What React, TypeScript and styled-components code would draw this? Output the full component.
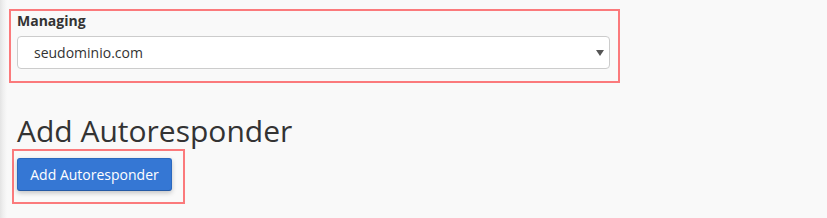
import React from "react";
import styled, { createGlobalStyle } from "styled-components";

const Global = createGlobalStyle`
  html, body { margin: 0; padding: 0; background: #f9f9f9; }
  body { font-family: "Open Sans", "Liberation Sans", sans-serif; color: #333; }
`;

const Page = styled.div`
  min-height: 218px;
  padding: 9px 0 0 9px;
  box-sizing: border-box;
  background: linear-gradient(to right, #e4e4e4 0px, #efefef 3px, #f9f9f9 7px);
`;

const Highlight = styled.div<{ $pad: string }>`
  border: 2px solid #fb7a7c;
  padding: ${(p) => p.$pad};
  box-sizing: border-box;
`;

const DomainBox = styled(Highlight)`
  width: 611px;
`;

const Label = styled.label`
  display: block;
  font-size: 14px;
  font-weight: 700;
  line-height: 20px;
  color: #333;
  margin-bottom: 5px;
`;

const SelectWrap = styled.div`
  position: relative;
  width: 593px;
  height: 33px;
  background: #fff;
  border: 1px solid #ccc;
  border-radius: 4px;
  box-sizing: border-box;
  display: flex;
  align-items: center;
  padding-left: 16px;
  font-size: 14px;
  color: #333;
`;

const Caret = styled.span`
  position: absolute;
  right: 5px;
  top: 13px;
  width: 0;
  height: 0;
  border-left: 4px solid transparent;
  border-right: 4px solid transparent;
  border-top: 6px solid #555;
`;

const Heading = styled.h1`
  margin: 28px 0 -2px 8px;
  font-size: 30px;
  font-weight: 400;
  line-height: 40px;
  color: #333;
`;

const ButtonBox = styled(Highlight)`
  display: inline-block;
  margin: 0 0 0 3px;
`;

const Button = styled.button`
  display: block;
  width: 155px;
  height: 33px;
  background: #3577d4;
  border: 1px solid #2b68be;
  border-bottom-color: #255aa5;
  border-radius: 3px;
  box-shadow: 0 2px 5px rgba(0, 0, 0, 0.22);
  color: #fff;
  font-family: "Open Sans", "Liberation Sans", sans-serif;
  font-size: 14px;
  padding: 0;
  cursor: pointer;
`;

export default function App() {
  return (
    <>
      <Global />
      <Page>
        <DomainBox $pad="0 8px 12px 6px">
          <Label>Managing</Label>
          <SelectWrap>
            seudominio.com
            <Caret />
          </SelectWrap>
        </DomainBox>
        <Heading>Add Autoresponder</Heading>
        <ButtonBox $pad="7px 11px 11px 3px">
          <Button>Add Autoresponder</Button>
        </ButtonBox>
      </Page>
    </>
  );
}
